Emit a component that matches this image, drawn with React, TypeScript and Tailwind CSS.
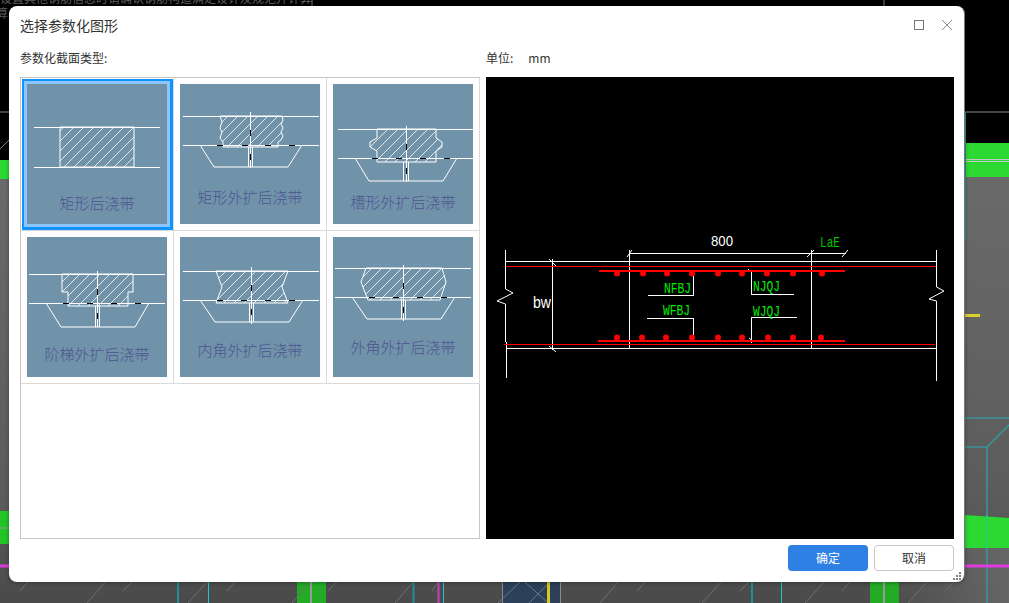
import { useState } from "react";

const cjk = "font-['Noto_Sans_CJK_SC','Noto_Sans',sans-serif]";

type Section = {
  label: string;
  labelY: number;
  top?: number;
  lower?: number;
  x1?: number;
  x2?: number;
  block: string;
  trap?: string;
  cx?: number;
  cy1?: number;
  cy2?: number;
  dbl?: [number, number, number, number];
  dashes?: number[];
  marks?: number[];
};

// coordinates are relative to the 140x140 thumbnail
const sections: Section[] = [
  {
    label: "矩形后浇带",
    labelY: 120,
    block: "33,43 107,43 107,83 33,83",
    top: 43,
    lower: 83,
    x1: 7,
    x2: 133,
  },
  {
    label: "矩形外扩后浇带",
    labelY: 114,
    top: 32,
    lower: 61,
    x1: 3,
    x2: 139,
    block: "40,32 102,32 103,36 101,40 103,44 101,48 103,52 101,56 98,58 98,63 43,63 43,58 40,54 42,48 40,44 42,38",
    trap: "20,61 34,83 108,83 122,61",
    cx: 70,
    cy1: 28,
    cy2: 84,
    dbl: [68.5, 72.5, 63, 83],
    dashes: [37, 62, 85, 109],
    marks: [46, 70],
  },
  {
    label: "槽形外扩后浇带",
    labelY: 119,
    top: 45,
    lower: 74,
    x1: 5,
    x2: 140,
    block: "44,45 44,54 37,58 37,63 44,67 44,78 103,78 103,67 109,63 109,58 103,54 103,45",
    trap: "22,74 36,97 110,97 124,74",
    cx: 73,
    cy1: 42,
    cy2: 98,
    dbl: [70.5, 75.5, 78, 97],
    dashes: [39, 63, 87, 111],
    marks: [60, 84],
  },
  {
    label: "阶梯外扩后浇带",
    labelY: 118,
    top: 37,
    lower: 66,
    x1: 2,
    x2: 138,
    block: "35,37 35,55 41,55 41,69 101,69 101,55 106,55 106,37",
    trap: "19,66 34,90 108,90 122,66",
    cx: 70,
    cy1: 34,
    cy2: 90,
    dbl: [68.5, 72.5, 69, 90],
    dashes: [36, 60, 84, 108],
    marks: [52, 76],
  },
  {
    label: "内角外扩后浇带",
    labelY: 114,
    top: 34,
    lower: 63,
    x1: 3,
    x2: 139,
    block: "36,34 42,50 36,66 108,66 102,50 108,34",
    trap: "20,63 35,85 109,85 123,63",
    cx: 71,
    cy1: 30,
    cy2: 87,
    dbl: [69.5, 73.5, 66, 85],
    dashes: [37, 61, 85, 109],
    marks: [48, 72],
  },
  {
    label: "外角外扩后浇带",
    labelY: 111,
    top: 31,
    lower: 60,
    x1: 2,
    x2: 138,
    block: "33,31 28,45 35,63 107,63 113,45 109,31",
    trap: "19,60 34,82 108,82 122,60",
    cx: 70,
    cy1: 28,
    cy2: 84,
    dbl: [68.5, 72.5, 63, 82],
    dashes: [36, 60, 84, 108],
    marks: [46, 70],
  },
];

function Thumb({ s, idx }: { s: Section; idx: number }) {
  return (
    <svg viewBox="0 0 140 140" className="block h-[140px] w-[140px] bg-[#7093a9]">
      <defs>
        <pattern id={`hatch-${idx}`} width="10" height="10" patternUnits="userSpaceOnUse">
          <path d="M-1 11 11 -1" stroke="#fff" strokeWidth="0.8" />
        </pattern>
      </defs>
      <polygon points={s.block} fill={`url(#hatch-${idx})`} stroke="#fff" strokeWidth="1" />
      <g stroke="#fff" strokeWidth="1" fill="none" shapeRendering="crispEdges">
        <path d={`M${s.x1} ${s.top}H${s.x2}M${s.x1} ${s.lower}H${s.x2}`} />
        {s.cx !== undefined && <path d={`M${s.cx} ${s.cy1}V${s.cy2}`} />}
        {s.dbl && <path d={`M${s.dbl[0]} ${s.dbl[2]}V${s.dbl[3]}M${s.dbl[1]} ${s.dbl[2]}V${s.dbl[3]}`} />}
      </g>
      {s.trap && <polyline points={s.trap} fill="none" stroke="#fff" strokeWidth="1" />}
      <g stroke="#000" strokeWidth="1" shapeRendering="crispEdges">
        {s.dashes?.map((d) => <path key={d} d={`M${d} ${s.lower}h6`} />)}
        {s.marks?.map((m) => <path key={m} d={`M${s.cx} ${m}v6`} />)}
      </g>
      <text x="70" y={s.labelY + 5} textAnchor="middle" fontSize="15" fontWeight="300" fill="#4d5591" className={cjk}>
        {s.label}
      </text>
    </svg>
  );
}

function CadBackdrop() {
  return (
    <svg viewBox="0 0 1009 603" className="absolute inset-0 h-[603px] w-[1009px]">
      <defs>
        <linearGradient id="floor" x1="0" y1="0" x2="0" y2="1">
          <stop offset="0" stopColor="#6a6a6a" />
          <stop offset="0.75" stopColor="#5c5c5c" />
          <stop offset="1" stopColor="#4a4a4a" />
        </linearGradient>
        <linearGradient id="floorRight" x1="0" y1="0" x2="1" y2="0">
          <stop offset="0" stopColor="#666" stopOpacity="0" />
          <stop offset="1" stopColor="#666" stopOpacity="1" />
        </linearGradient>
      </defs>
      <rect width="1009" height="603" fill="#000" />
      <rect x="0" y="177" width="1009" height="426" fill="url(#floor)" />
      <rect x="880" y="540" width="129" height="63" fill="url(#floorRight)" />
      <rect x="965" y="143" width="44" height="34" fill="#2cd932" />
      <rect x="0" y="160" width="9" height="19" fill="#2cd932" />
      <path d="M965 159.5H1009M965 161.5H1009" stroke="#c8c8c8" />
      <path d="M0 112H9M0 149 9 140M965 112H1009" stroke="#8a8a8a" />
      <path d="M312 0V6M884 0V6" stroke="#777" />
      <text x="0" y="3" fontSize="12" fill="#5f5f5f" className={cjk}>
        设置其他钢筋信息时请确认钢筋构造满足设计及规范并计算
      </text>
      <text x="-4" y="18" fontSize="12" fill="#5a5a5a" className={cjk}>
        算
      </text>
      <path d="M965.5 112V240" stroke="#2a8f95" />
      <rect x="965" y="314" width="15" height="3" fill="#dcd22c" />
      <path d="M965 418H1009M965 447H987L1009 425M987 447V603" stroke="#28a9ad" strokeWidth="1.2" fill="none" />
      <polygon points="965,515 1009,518 1009,548 965,548" fill="#2cd932" />
      <path d="M987 515V548" stroke="#20c9a8" />
      <path d="M965 566H1009M0 566H9" stroke="#e03be0" strokeWidth="3" />
      <rect x="0" y="511" width="9" height="33" fill="#22c428" />
      <path d="M0 528H9" stroke="#9a9a9a" />
      <rect x="502" y="582" width="59" height="21" fill="#2c4159" />
      <path d="M502.5 582V603M560.5 582V603" stroke="#8b8b8b" />
      <path d="M498 603 520 582M525 582 548 603M529 603 550 582" stroke="#6a7786" />
      <rect x="547" y="582" width="3" height="21" fill="#d4c81f" />
      <rect x="297" y="582" width="29" height="21" fill="#23ab26" />
      <path d="M311 582V603" stroke="#9a9a9a" strokeWidth="2" />
      <rect x="870" y="582" width="29" height="21" fill="#23ab26" />
      <path d="M884 582V603" stroke="#9a9a9a" strokeWidth="2" />
      <path d="M178 582V603M413.5 582V603M752 582V603" stroke="#1f8f95" strokeWidth="2" />
      <path d="M208.5 582V603M443.5 582V603M781.5 582V603" stroke="#16c9d1" />
      <path d="M438.5 582V603" stroke="#c63fc6" strokeWidth="2" />
      <g stroke="#6e6e6e">
        <path d="M20 591 28 582M87 603 105 582M123 591 132 582M188 603 207 582M227 591 235 582M292 603 310 582M328 591 337 582" />
        <path d="M395 603 413 582M432 591 438 582M600 603 618 582M637 591 645 582M702 603 721 582M740 591 749 582" />
        <path d="M805 603 824 582M842 591 850 582M908 603 927 582M945 591 954 582" />
      </g>
    </svg>
  );
}

const dots = [617, 643, 667, 692, 718, 742, 767, 793, 822];
const dotsLow = [617, 642, 666, 692, 718, 742, 768, 793, 821];

function Preview() {
  return (
    <svg viewBox="486 77 468 462" className="h-[462px] w-[468px] shrink-0 bg-black">
      <g fill="none" stroke="#fff" strokeWidth="1" shapeRendering="crispEdges">
        <path d="M505 261.5H936M506 348.5H936M552.5 259V350M629.5 250V348M811.5 250V348M629 253.5H846" />
        <path d="M693.5 275V295.5H648M693.5 335V318.5H647M751.5 272V294.5H794M751.5 343V317.5H797" />
      </g>
      <g fill="none" stroke="#fff" strokeWidth="1">
        <path d="M505.5 250V289L513 293 497 301 505.5 304V342M506.5 342V378" />
        <path d="M936.5 250V287L944 291 929 299 936.5 301V381" />
        <path d="M549 259 556 266M549 346 556 352M627 257 632 250M807 257 814 250M842 257 848 250M748 269 752 273M749 338 754 342" />
      </g>
      <g fill="none" stroke="#f00" shapeRendering="crispEdges">
        <path d="M506 266.5H936M504 344.5H935" />
        <path d="M599 271H845M598 341H845" strokeWidth="2" />
      </g>
      <g fill="#f00">
        {dots.map((x) => <circle key={x} cx={x} cy="273.5" r="3" />)}
        {dotsLow.map((x) => <circle key={x} cx={x} cy="337.5" r="3" />)}
      </g>
      <g className="font-['Liberation_Sans',sans-serif]" fill="#fff">
        <text x="711" y="246" fontSize="14" textLength="22" lengthAdjust="spacingAndGlyphs">800</text>
        <text x="533" y="308" fontSize="16" textLength="18" lengthAdjust="spacingAndGlyphs">bw</text>
      </g>
      <g className="font-['Liberation_Mono',monospace]">
        <text x="820" y="247" fontSize="14" fill="#00c000" textLength="20" lengthAdjust="spacingAndGlyphs">LaE</text>
        <g fontSize="14" fill="#00f000">
          <text x="664" y="292.5" textLength="27" lengthAdjust="spacingAndGlyphs">NFBJ</text>
          <text x="663" y="315" textLength="27" lengthAdjust="spacingAndGlyphs">WFBJ</text>
          <text x="753" y="291" textLength="27" lengthAdjust="spacingAndGlyphs">NJQJ</text>
          <text x="753" y="316" textLength="27" lengthAdjust="spacingAndGlyphs">WJQJ</text>
        </g>
      </g>
    </svg>
  );
}

export default function App() {
  const [selected, setSelected] = useState(0);

  return (
    <div className={`relative h-[603px] w-[1009px] overflow-hidden bg-black ${cjk}`}>
      <CadBackdrop />

      <div className="absolute left-[9px] top-[6px] flex h-[576px] w-[956px] flex-col rounded-lg border-r border-[#777] bg-white text-[#333] shadow-[0_1px_4px_rgba(0,0,0,0.35)]">
        <div className="flex h-[38px] items-center justify-between pl-[11px] pr-[12px]">
          <span className="text-[14px]">选择参数化图形</span>
          <div className="flex items-center gap-[18px]">
            <svg width="10" height="10" viewBox="0 0 10 10" className="overflow-visible">
              <rect x="0.5" y="0.5" width="9" height="9" fill="none" stroke="#777" />
            </svg>
            <svg width="10" height="10" viewBox="0 0 10 10" className="overflow-visible">
              <path d="M0 0 10 10M10 0 0 10" stroke="#888" strokeWidth="1" />
            </svg>
          </div>
        </div>

        <div className="mb-[5px] flex h-[28px] items-center gap-[6px] pl-[11px] pr-[10px] text-[12px]">
          <span className="w-[460px] shrink-0">参数化截面类型:</span>
          <span className="flex w-[468px] shrink-0 gap-[15px]">
            <span>单位:</span>
            <span>mm</span>
          </span>
        </div>

        <div className="flex h-[462px] gap-[6px] pl-[11px] pr-[10px]">
          <div className="h-full w-[460px] shrink-0 border border-[#c6c6c6]">
            <div className="grid grid-cols-[repeat(3,153px)] auto-rows-[153px]">
              {sections.map((s, i) => (
                <button
                  key={s.label}
                  onClick={() => setSelected(i)}
                  className="relative flex items-start border-b border-r border-[#dadada] pl-[6px] pt-[6px]"
                >
                  <Thumb s={s} idx={i} />
                  {selected === i && (
                    <span className="absolute left-[1px] top-[1px] h-[151px] w-[151px] border-b-3 border-l-2 border-r-3 border-t-2 border-[#0f94ff]">
                      <span className="block h-full w-full border-3 border-[#8cc6ff]" />
                    </span>
                  )}
                </button>
              ))}
            </div>
          </div>
          <Preview />
        </div>

        <div className="flex justify-end gap-[6px] pl-[11px] pr-[10px] pt-[6px] text-[12px]">
          <button className="h-[26px] w-[80px] rounded bg-[#2f80e4] text-white">确定</button>
          <button className="h-[26px] w-[80px] rounded border border-[#c8c8c8] bg-white text-[#333]">取消</button>
        </div>

        {/* resize grip */}
        <svg width="9" height="8" viewBox="0 0 9 8" className="absolute bottom-[2px] right-[2px]">
          <g fill="#808080">
            <rect x="6" y="0" width="2" height="2" />
            <rect x="3" y="3" width="2" height="2" />
            <rect x="6" y="3" width="2" height="2" />
            <rect x="0" y="6" width="2" height="2" />
            <rect x="3" y="6" width="2" height="2" />
            <rect x="6" y="6" width="2" height="2" />
          </g>
        </svg>
      </div>
    </div>
  );
}
